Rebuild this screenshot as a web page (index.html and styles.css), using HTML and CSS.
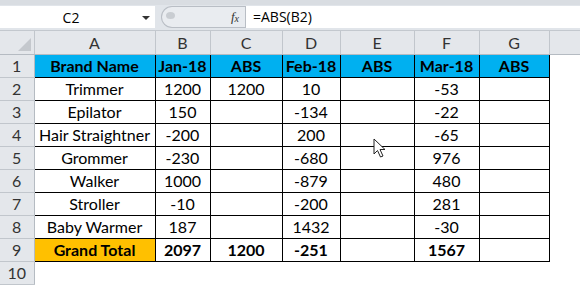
FILE: index.html
```html
<!DOCTYPE html>
<html lang="en">
<head>
    <meta charset="UTF-8">
    <title>ABS in Excel</title>
    <link rel="stylesheet" href="styles.css">
</head>
<body>

<div class="toolbar">
    <div class="formula-bar">
        <div class="name-box">
            <span class="name-text">C2</span>
            <span class="name-arrow"></span>
        </div>
        <div class="fx-area">
            <div class="fx-pill">
                <span class="grip"></span>
                <span class="fx">f<sub>x</sub></span>
            </div>
        </div>
        <div class="formula-input">=ABS(B2)</div>
    </div>
</div>

<table class="sheet">
    <colgroup>
        <col style="width:34px">
        <col style="width:121px">
        <col style="width:55px">
        <col style="width:72px">
        <col style="width:58px">
        <col style="width:74px">
        <col style="width:65px">
        <col style="width:70px">
        <col style="width:31px">
    </colgroup>
    <tr class="col-heads">
        <th class="corner"><span class="corner-mark"></span></th>
        <th>A</th><th>B</th><th>C</th><th>D</th><th>E</th><th>F</th><th>G</th><th class="spare"></th>
    </tr>
    <tr class="head-row">
        <th class="row-head">1</th>
        <td>Brand Name</td><td>Jan-18</td><td>ABS</td><td>Feb-18</td><td>ABS</td><td>Mar-18</td><td>ABS</td><td class="blank"></td>
    </tr>
    <tr>
        <th class="row-head">2</th>
        <td>Trimmer</td><td>1200</td><td>1200</td><td>10</td><td></td><td>-53</td><td></td><td class="blank"></td>
    </tr>
    <tr>
        <th class="row-head">3</th>
        <td>Epilator</td><td>150</td><td></td><td>-134</td><td></td><td>-22</td><td></td><td class="blank"></td>
    </tr>
    <tr>
        <th class="row-head">4</th>
        <td>Hair Straightner</td><td>-200</td><td></td><td>200</td><td></td><td>-65</td><td></td><td class="blank"></td>
    </tr>
    <tr>
        <th class="row-head">5</th>
        <td>Grommer</td><td>-230</td><td></td><td>-680</td><td></td><td>976</td><td></td><td class="blank"></td>
    </tr>
    <tr>
        <th class="row-head">6</th>
        <td>Walker</td><td>1000</td><td></td><td>-879</td><td></td><td>480</td><td></td><td class="blank"></td>
    </tr>
    <tr>
        <th class="row-head">7</th>
        <td>Stroller</td><td>-10</td><td></td><td>-200</td><td></td><td>281</td><td></td><td class="blank"></td>
    </tr>
    <tr>
        <th class="row-head">8</th>
        <td>Baby Warmer</td><td>187</td><td></td><td>1432</td><td></td><td>-30</td><td></td><td class="blank"></td>
    </tr>
    <tr class="total-row">
        <th class="row-head">9</th>
        <td class="total-label">Grand Total</td><td>2097</td><td>1200</td><td>-251</td><td></td><td>1567</td><td></td><td class="blank"></td>
    </tr>
    <tr class="empty-row">
        <th class="row-head">10</th>
        <td class="blank"></td><td class="blank"></td><td class="blank"></td><td class="blank"></td><td class="blank"></td><td class="blank"></td><td class="blank"></td><td class="blank"></td>
    </tr>
</table>

<!-- mouse pointer over the sheet -->
<svg class="pointer" width="16" height="22" viewBox="0 0 16 22">
    <path d="M1 1 L1 16 L4.5 12.5 L7.5 19 L10 18 L7 11.5 L12 11.5 Z" fill="#ffffff" stroke="#222" stroke-width="1"/>
</svg>

</body>
</html>
```

FILE: styles.css
```css
body {
    margin: 0;
    width: 580px;
    height: 286px;
    overflow: hidden;
    position: relative;
    background-color: #ffffff;
    font-family: Lato, "Liberation Sans", sans-serif;
    color: #000;
}

.toolbar {
    height: 31px;
    box-sizing: border-box;
    padding-top: 6px;
    background-color: #e1e5ea;
    border-top: 5px solid #d9dde2;
    border-bottom: 1px solid #c3c8ce;
}

.formula-bar {
    display: flex;
    height: 22px;
    margin-top: -5px;
}

.name-box {
    width: 155px;
    background-color: #ffffff;
    display: flex;
    align-items: center;
    position: relative;
}

.name-text {
    width: 142px;
    text-align: center;
    font-family: "Open Sans", "Liberation Sans", sans-serif;
    font-size: 14px;
}

.name-arrow {
    width: 0;
    height: 0;
    border-left: 4px solid transparent;
    border-right: 4px solid transparent;
    border-top: 4px solid #333;
    margin-top: 2px;
}

.fx-area {
    width: 90px;
    background-color: #e1e5ea;
    display: flex;
    align-items: center;
}

.fx-pill {
    flex: 1;
    height: 20px;
    margin-left: 6px;
    border: 1px solid #b9bec5;
    border-right: none;
    border-radius: 11px 0 0 11px;
    background-color: #e9ecf0;
    display: flex;
    align-items: center;
    justify-content: space-between;
    padding: 0 6px 0 4px;
}

.grip {
    width: 9px;
    height: 7px;
    border-radius: 50%;
    background-color: #c9cdd2;
    margin-top: -4px;
}

.fx {
    font-family: "Liberation Serif", serif;
    font-style: italic;
    font-size: 13px;
    color: #333;
}

.fx sub {
    font-size: 10px;
    vertical-align: -1px;
}

.formula-input {
    flex: 1;
    background-color: #ffffff;
    border-left: 1px solid #b9bec5;
    padding-left: 7px;
    font-family: "Open Sans", "Liberation Sans", sans-serif;
    font-size: 14px;
    line-height: 22px;
}

.sheet {
    border-collapse: collapse;
    table-layout: fixed;
    width: 580px;
    font-size: 16px;
}

.sheet td,
.sheet th {
    padding: 0;
    text-align: center;
    white-space: nowrap;
    overflow: hidden;
}

.col-heads th {
    height: 21px;
    background-color: #e4e7eb;
    border-right: 1px solid #c1c6cc;
    border-bottom: 1px solid #b5bbc2;
    font-weight: normal;
    font-size: 16px;
    color: #333;
}

.col-heads .spare {
    border-right: none;
}

.corner {
    position: relative;
}

.corner-mark {
    position: absolute;
    right: 3px;
    bottom: 3px;
    width: 0;
    height: 0;
    border-left: 13px solid transparent;
    border-bottom: 13px solid #c4c8cd;
}

.sheet tr {
    height: 23px;
}

.row-head {
    background-color: #e4e7eb;
    border-right: 1px solid #b5bbc2;
    border-bottom: 1px solid #c1c6cc;
    font-weight: normal;
    font-size: 16px;
    color: #333;
}

.sheet td {
    border: 1px solid #000;
}

.sheet td.blank {
    border: none;
}

.head-row td {
    background-color: #00b0f0;
    font-weight: bold;
}

.head-row td.blank {
    background-color: #ffffff;
}

.total-row td {
    font-weight: bold;
}

.total-row .total-label {
    background-color: #ffc000;
}

.pointer {
    position: absolute;
    left: 373px;
    top: 138px;
}
```
